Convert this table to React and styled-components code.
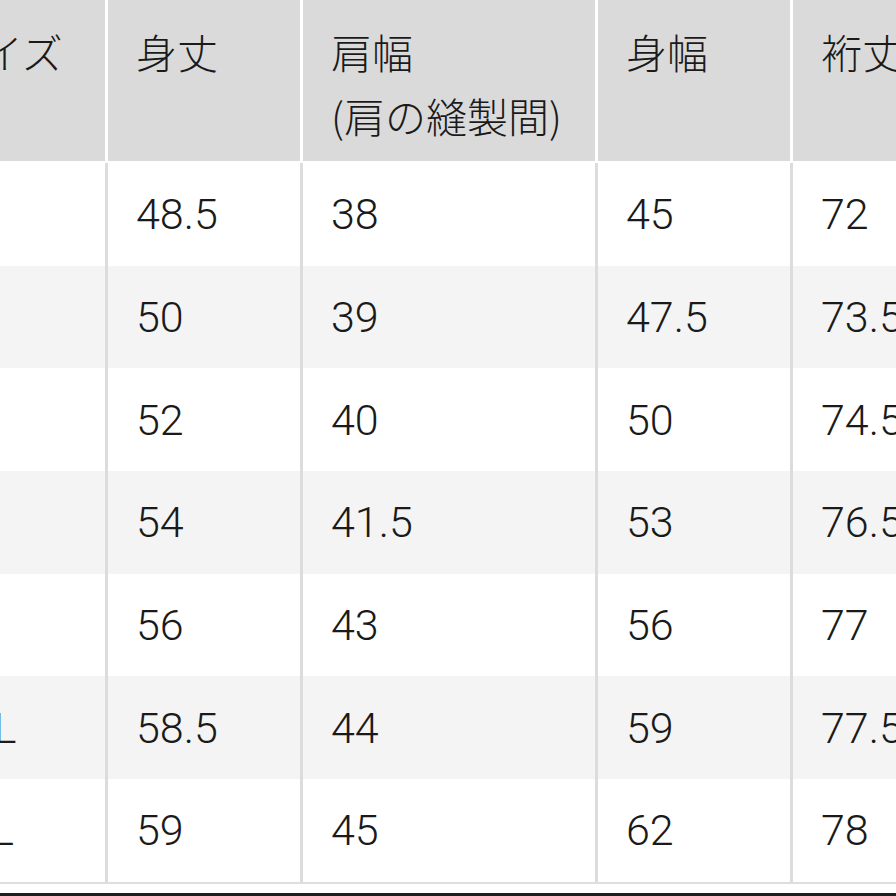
import styled, { createGlobalStyle } from "styled-components";

const GlobalStyle = createGlobalStyle`
    html, body {
        margin: 0;
        padding: 0;
        background: #ffffff;
    }
    body {
        font-family: "Liberation Sans", "Noto Sans CJK JP", sans-serif;
        color: #1c1c1c;
    }
`;

const Viewport = styled.div`
    width: 896px;
    height: 896px;
    overflow: hidden;
    background: #ffffff;
`;

const Table = styled.div`
    margin-left: -90px;
    width: 1075px;
    display: flex;
    flex-direction: column;
`;

const Row = styled.div`
    display: grid;
    grid-template-columns: 195px 195px 295px 195px 195px;
    background: ${(p) => (p.$head ? "#dadada" : p.$alt ? "#f4f4f4" : "#ffffff")};
    height: ${(p) => (p.$head ? "161px" : "102.7px")};
    border-bottom: ${(p) => (p.$head ? "2px solid #ffffff" : "none")};
`;

const HeadCell = styled.div`
    padding: 19px 0 0 28px;
    font-size: 41px;
    line-height: 64px;
    font-family: "Noto Sans CJK JP", "Liberation Sans", sans-serif;
    font-weight: 300;
    color: #1a1a1a;
    border-left: 3px solid ${(p) => (p.$first ? "transparent" : "#ffffff")};
    white-space: nowrap;
`;

const Cell = styled.div`
    display: flex;
    align-items: center;
    padding-left: 28px;
    font-size: 43px;
    font-family: "Roboto", "Liberation Sans", sans-serif;
    font-weight: 300;
    color: #1a1a1a;
    border-left: 3px solid ${(p) => (p.$first ? "transparent" : "#dcdcdc")};
    white-space: nowrap;
`;

const BottomEdge = styled.div`
    height: 2px;
    background: #dedede;
`;

const Gap = styled.div`
    height: 9px;
    background: #ffffff;
`;

const DarkEdge = styled.div`
    height: 4px;
    background: #1e1e1e;
`;

const headers = [
    ["サイズ"],
    ["身丈"],
    ["肩幅", "(肩の縫製間)"],
    ["身幅"],
    ["裄丈"],
];

const rows = [
    ["XS", "48.5", "38", "45", "72"],
    ["S", "50", "39", "47.5", "73.5"],
    ["M", "52", "40", "50", "74.5"],
    ["L", "54", "41.5", "53", "76.5"],
    ["XL", "56", "43", "56", "77"],
    ["XXL", "58.5", "44", "59", "77.5"],
    ["3XL", "59", "45", "62", "78"],
];

export default function App() {
    return (
        <Viewport>
            <GlobalStyle />
            <Table>
                <Row $head>
                    {headers.map((lines, i) => (
                        <HeadCell key={i} $first={i === 0}>
                            {lines.map((l) => (
                                <div key={l}>{l}</div>
                            ))}
                        </HeadCell>
                    ))}
                </Row>
                {rows.map((r, ri) => (
                    <Row key={r[0]} $alt={ri % 2 === 1}>
                        {r.map((v, ci) => (
                            <Cell key={ci} $first={ci === 0}>
                                {v}
                            </Cell>
                        ))}
                    </Row>
                ))}
                <BottomEdge />
                <Gap />
                <DarkEdge />
            </Table>
        </Viewport>
    );
}
